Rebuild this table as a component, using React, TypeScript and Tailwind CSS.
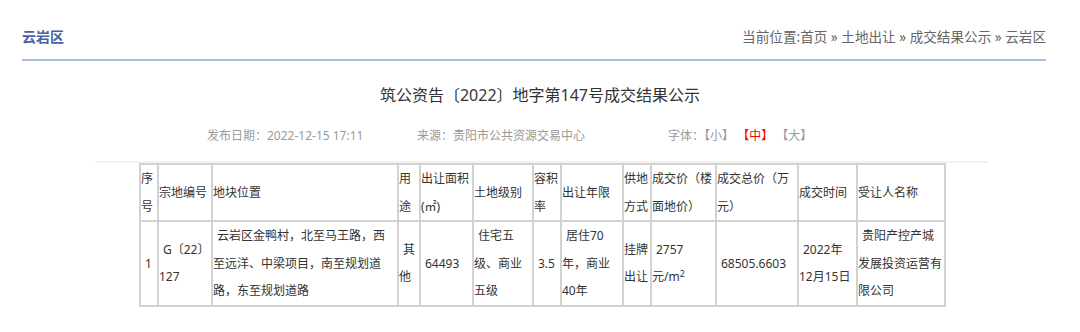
const headers: React.ReactNode[] = [
  <>序<br />号</>,
  "宗地编号",
  "地块位置",
  <>用<br />途</>,
  <>出让面积<br />(㎡)</>,
  "土地级别",
  <>容积<br />率</>,
  "出让年限",
  <>供地<br />方式</>,
  <>成交价（楼<br />面地价）</>,
  <>成交总价（万<br />元）</>,
  "成交时间",
  "受让人名称",
]

const cells: { content: React.ReactNode; indent?: boolean }[] = [
  { content: "1", indent: true },
  { content: <>G〔22〕<br />127</>, indent: true },
  {
    content: (
      <>
        云岩区金鸭村，北至马王路，西<br />至远洋、中梁项目，南至规划道<br />路，东至规划道路
      </>
    ),
    indent: true,
  },
  { content: <>其<br />他</>, indent: true },
  { content: "64493", indent: true },
  { content: <>住宅五<br />级、商业<br />五级</>, indent: true },
  { content: "3.5", indent: true },
  { content: <>居住70<br />年，商业<br />40年</>, indent: true },
  { content: <>挂牌<br />出让</> },
  { content: <>2757<br />元/m<sup>2</sup></>, indent: true },
  { content: "68505.6603", indent: true },
  { content: <>2022年<br />12月15日</>, indent: true },
  { content: <>贵阳产控产城<br />发展投资运营有<br />限公司</>, indent: true },
]

const colWidths = [18, 54, 186, 22, 53, 60, 28, 62, 28, 65, 82, 59, 88]

export default function App() {
  return (
    <div className="w-[1080px] h-[332px] bg-white overflow-hidden font-['Noto_Sans','Noto_Sans_CJK_SC',sans-serif]">
      <div className="ml-[22px] w-[1024px] flex justify-between items-center pt-[27px] pb-[12px] border-b-2 border-[#abbbe3] leading-[20px]">
        <span className="text-[14px] font-bold text-[#4862a8]">云岩区</span>
        <span className="text-[13.6px] text-[#666]">当前位置:首页 » 土地出让 » 成交结果公示 » 云岩区</span>
      </div>

      <div className="ml-[95px] w-[893px]">
        <h1 className="mt-[22px] pr-[3px] text-center text-[16px] leading-[24px] text-[#333]">
          筑公资告〔2022〕地字第147号成交结果公示
        </h1>

        <div className="mt-[19px] pl-[112px] flex text-[12px] leading-[20px] text-[#999]">
          <span className="w-[210px]">发布日期：2022-12-15 17:11</span>
          <span className="w-[251px]">来源：贵阳市公共资源交易中心</span>
          <span>
            字体：【小】 <span className="text-[#f00]">【中】</span> 【大】
          </span>
        </div>

        <div className="mt-[15px] h-[2px] bg-[#f1f1f1]" />

        <table className="ml-[44px] w-[805px] table-fixed border-collapse text-[12px] leading-[27.5px] text-[#333]">
          <colgroup>
            {colWidths.map((w, i) => (
              <col key={i} style={{ width: w }} />
            ))}
          </colgroup>
          <tbody>
            <tr>
              {headers.map((h, i) => (
                <td key={i} className="border-2 border-[#d2d2d2] p-0 align-middle text-left">
                  {h}
                </td>
              ))}
            </tr>
            <tr>
              {cells.map((c, i) => (
                <td
                  key={i}
                  className={
                    c.indent
                      ? "border-2 border-[#d2d2d2] p-0 align-middle text-left indent-1"
                      : "border-2 border-[#d2d2d2] p-0 align-middle text-left"
                  }
                >
                  {c.content}
                </td>
              ))}
            </tr>
          </tbody>
        </table>
      </div>
    </div>
  )
}
